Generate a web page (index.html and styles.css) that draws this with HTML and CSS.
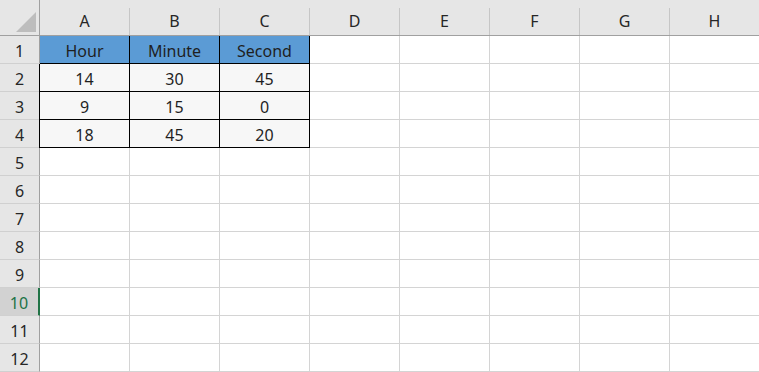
FILE: index.html
```html
<!DOCTYPE html>
<html>
<head>
    <link rel="stylesheet" href="styles.css">
</head>
<body>
    <div class="sheet">
        <!-- column headers -->
        <div class="corner">
            <svg width="22" height="21" viewBox="0 0 22 21"><polygon points="21,0 21,20 1,20" fill="#bdbdbd"/></svg>
        </div>
        <div class="col-head"><span>A</span></div>
        <div class="col-head"><span>B</span></div>
        <div class="col-head"><span>C</span></div>
        <div class="col-head"><span>D</span></div>
        <div class="col-head"><span>E</span></div>
        <div class="col-head"><span>F</span></div>
        <div class="col-head"><span>G</span></div>
        <div class="col-head"><span>H</span></div>

        <!-- row 1 -->
        <div class="row-head">1</div>
        <div class="cell title first">Hour</div>
        <div class="cell title">Minute</div>
        <div class="cell title">Second</div>
        <div class="cell"></div><div class="cell"></div><div class="cell"></div><div class="cell"></div><div class="cell"></div>

        <!-- row 2 -->
        <div class="row-head">2</div>
        <div class="cell data first">14</div>
        <div class="cell data">30</div>
        <div class="cell data">45</div>
        <div class="cell"></div><div class="cell"></div><div class="cell"></div><div class="cell"></div><div class="cell"></div>

        <!-- row 3 -->
        <div class="row-head">3</div>
        <div class="cell data first">9</div>
        <div class="cell data">15</div>
        <div class="cell data">0</div>
        <div class="cell"></div><div class="cell"></div><div class="cell"></div><div class="cell"></div><div class="cell"></div>

        <!-- row 4 -->
        <div class="row-head">4</div>
        <div class="cell data first">18</div>
        <div class="cell data">45</div>
        <div class="cell data">20</div>
        <div class="cell"></div><div class="cell"></div><div class="cell"></div><div class="cell"></div><div class="cell"></div>

        <div class="row-head">5</div>
        <div class="cell"></div><div class="cell"></div><div class="cell"></div><div class="cell"></div><div class="cell"></div><div class="cell"></div><div class="cell"></div><div class="cell"></div>

        <div class="row-head">6</div>
        <div class="cell"></div><div class="cell"></div><div class="cell"></div><div class="cell"></div><div class="cell"></div><div class="cell"></div><div class="cell"></div><div class="cell"></div>

        <div class="row-head">7</div>
        <div class="cell"></div><div class="cell"></div><div class="cell"></div><div class="cell"></div><div class="cell"></div><div class="cell"></div><div class="cell"></div><div class="cell"></div>

        <div class="row-head">8</div>
        <div class="cell"></div><div class="cell"></div><div class="cell"></div><div class="cell"></div><div class="cell"></div><div class="cell"></div><div class="cell"></div><div class="cell"></div>

        <div class="row-head">9</div>
        <div class="cell"></div><div class="cell"></div><div class="cell"></div><div class="cell"></div><div class="cell"></div><div class="cell"></div><div class="cell"></div><div class="cell"></div>

        <div class="row-head active">10</div>
        <div class="cell"></div><div class="cell"></div><div class="cell"></div><div class="cell"></div><div class="cell"></div><div class="cell"></div><div class="cell"></div><div class="cell"></div>

        <div class="row-head">11</div>
        <div class="cell"></div><div class="cell"></div><div class="cell"></div><div class="cell"></div><div class="cell"></div><div class="cell"></div><div class="cell"></div><div class="cell"></div>

        <div class="row-head">12</div>
        <div class="cell"></div><div class="cell"></div><div class="cell"></div><div class="cell"></div><div class="cell"></div><div class="cell"></div><div class="cell"></div><div class="cell"></div>
    </div>
</body>
</html>
```

FILE: styles.css
```css
body {
    margin: 0;
    background: #fff;
    font-family: "Noto Sans", "Open Sans", sans-serif;
    font-size: 16px;
    color: #1f1f1f;
    overflow: hidden;
}

.sheet {
    display: grid;
    grid-template-columns: 40px repeat(8, 90px);
    grid-template-rows: 36px repeat(12, 28px);
}

.corner {
    background: #e6e6e6;
    border-right: 1px solid #a0a0a0;
    border-bottom: 1px solid #a0a0a0;
    display: flex;
    align-items: flex-start;
    padding: 12px 0 0 15px;
}

.corner svg {
    display: block;
}

.col-head {
    background: #e6e6e6;
    border-bottom: 1px solid #a0a0a0;
    display: flex;
    align-items: flex-end;
}

.col-head span {
    flex: 1;
    height: 27px;
    line-height: 27px;
    text-align: center;
    border-right: 1px solid #c6c6c6;
    color: #262626;
}

.row-head {
    background: #e6e6e6;
    border-right: 1px solid #a0a0a0;
    border-bottom: 1px solid #d0d0d0;
    text-align: center;
    padding-top: 3px;
    line-height: 24px;
    color: #262626;
}

.row-head.active {
    background: #d2d2d2;
    color: #217346;
    border-right: 2px solid #217346;
}

.cell {
    border-right: 1px solid #d4d4d4;
    border-bottom: 1px solid #d4d4d4;
    text-align: center;
    padding-top: 3px;
    line-height: 24px;
}

.cell.title {
    background: #5b9bd5;
    border-right-color: #000;
    border-bottom-color: #000;
}

.cell.data {
    background: #f7f7f7;
    border-right-color: #000;
    border-bottom-color: #000;
}

.cell.data.first {
    box-shadow: -1px 0 0 #000;
}
```
